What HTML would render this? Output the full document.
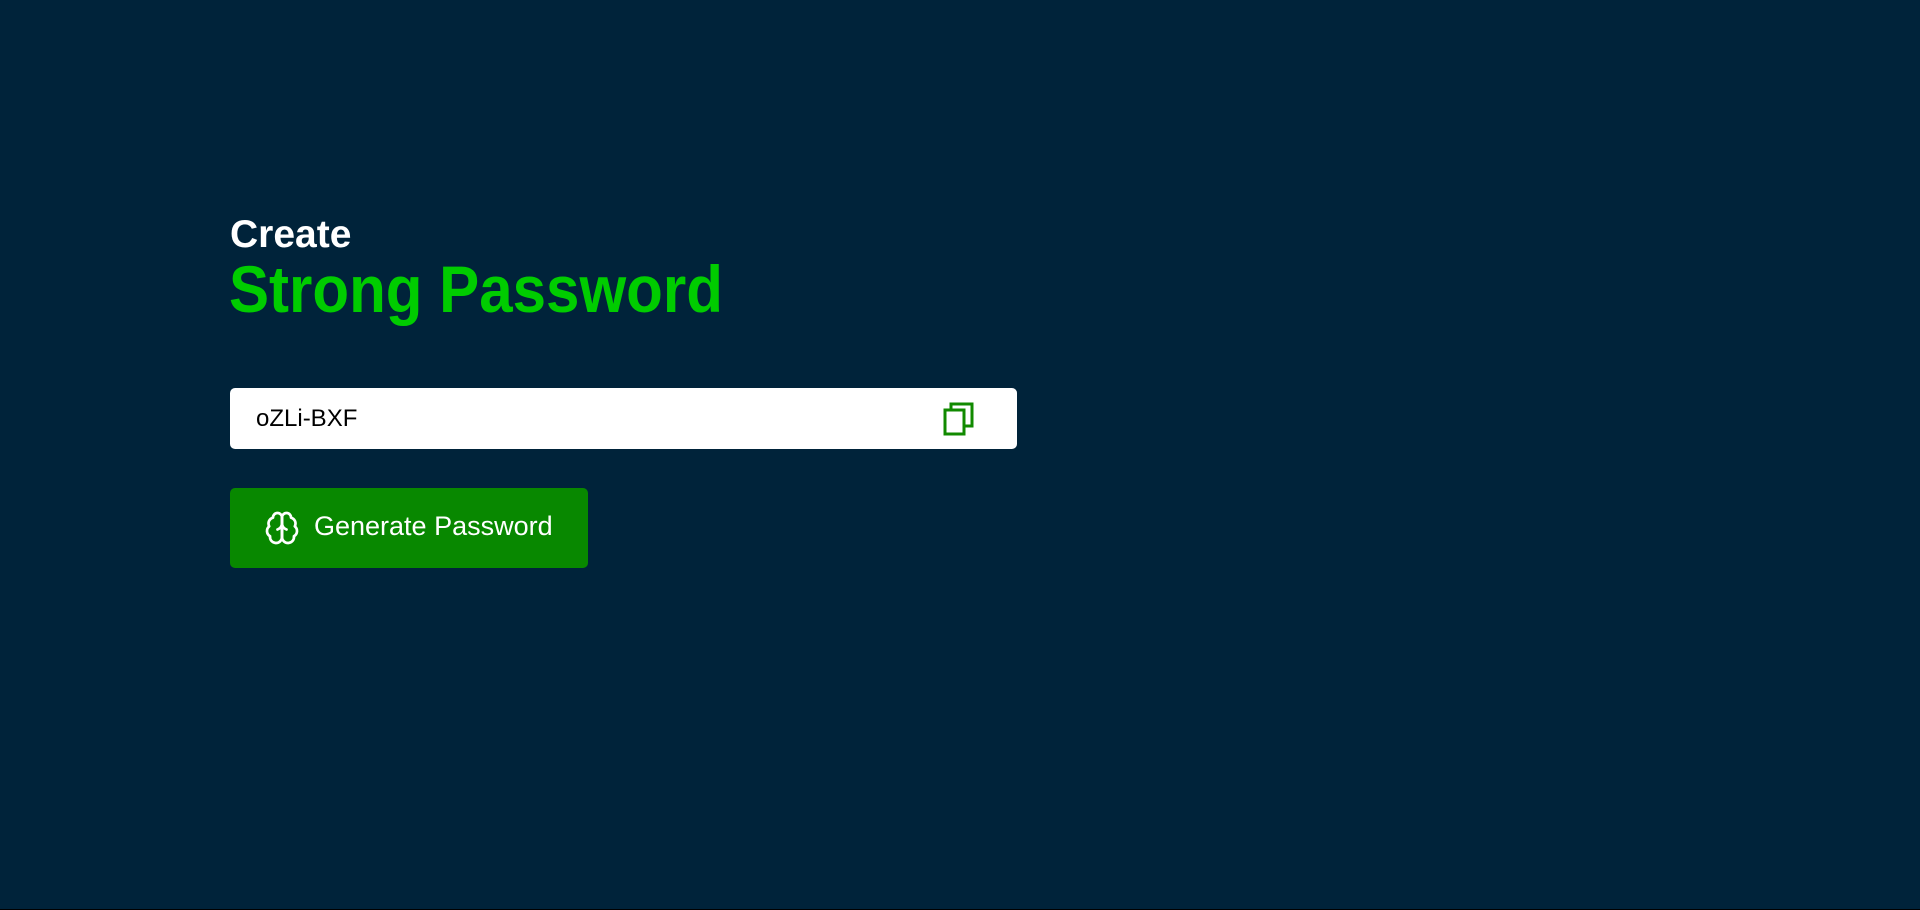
<!DOCTYPE html>
<html><head><style>
html,body{margin:0;padding:0;width:1920px;height:910px;overflow:hidden;background:#00233a;font-family:"Liberation Sans",Arial,sans-serif}
.bl{position:absolute;left:0;top:909px;width:1920px;height:1px;background:#000}
h2{position:absolute;left:230px;top:211px;margin:0;font-size:39px;font-weight:bold;color:#fff;line-height:48px}
h1{position:absolute;left:229px;top:249px;margin:0;font-size:66px;font-weight:bold;color:#00cc00;line-height:80px;transform:scaleX(0.91);transform-origin:left top;white-space:nowrap}
.inp{position:absolute;left:230px;top:388px;width:787px;height:61px;background:#fff;border-radius:5px}
.inp span{position:absolute;left:26px;top:17px;font-size:24px;color:#000}
.inp svg{position:absolute;left:713px;top:14px}
.btn{position:absolute;left:230px;top:488px;width:358px;height:80px;background:#088800;border-radius:5px;color:#fff}
.btn span{position:absolute;left:84px;top:23px;font-size:27px}
.btn svg{position:absolute;left:34px;top:22px}
</style></head><body>
<h2>Create</h2>
<h1>Strong Password</h1>
<div class="inp"><span>oZLi-BXF</span>
<svg width="32" height="34" viewBox="0 0 32 34" fill="none" stroke="#118a00" stroke-width="3"><rect x="2" y="8" width="19" height="24" fill="#fff"/><path d="M8 8V2h21v22h-8"/></svg></div>
<div class="btn"><svg width="36" height="36" viewBox="0 0 24 24" fill="none" stroke="#fff" stroke-width="1.8" stroke-linecap="round" stroke-linejoin="round"><path d="M12 5a3 3 0 1 0-5.997.125 4 4 0 0 0-2.526 5.77 4 4 0 0 0 .556 6.588A4 4 0 1 0 12 18Z"/><path d="M12 5a3 3 0 1 1 5.997.125 4 4 0 0 1 2.526 5.77 4 4 0 0 1-.556 6.588A4 4 0 1 1 12 18Z"/><path d="M12 5v13M9 13a4.5 4.5 0 0 0 3-4M15 13a4.5 4.5 0 0 1-3-4"/></svg><span>Generate Password</span></div>
<div class="bl"></div>
</body></html>
